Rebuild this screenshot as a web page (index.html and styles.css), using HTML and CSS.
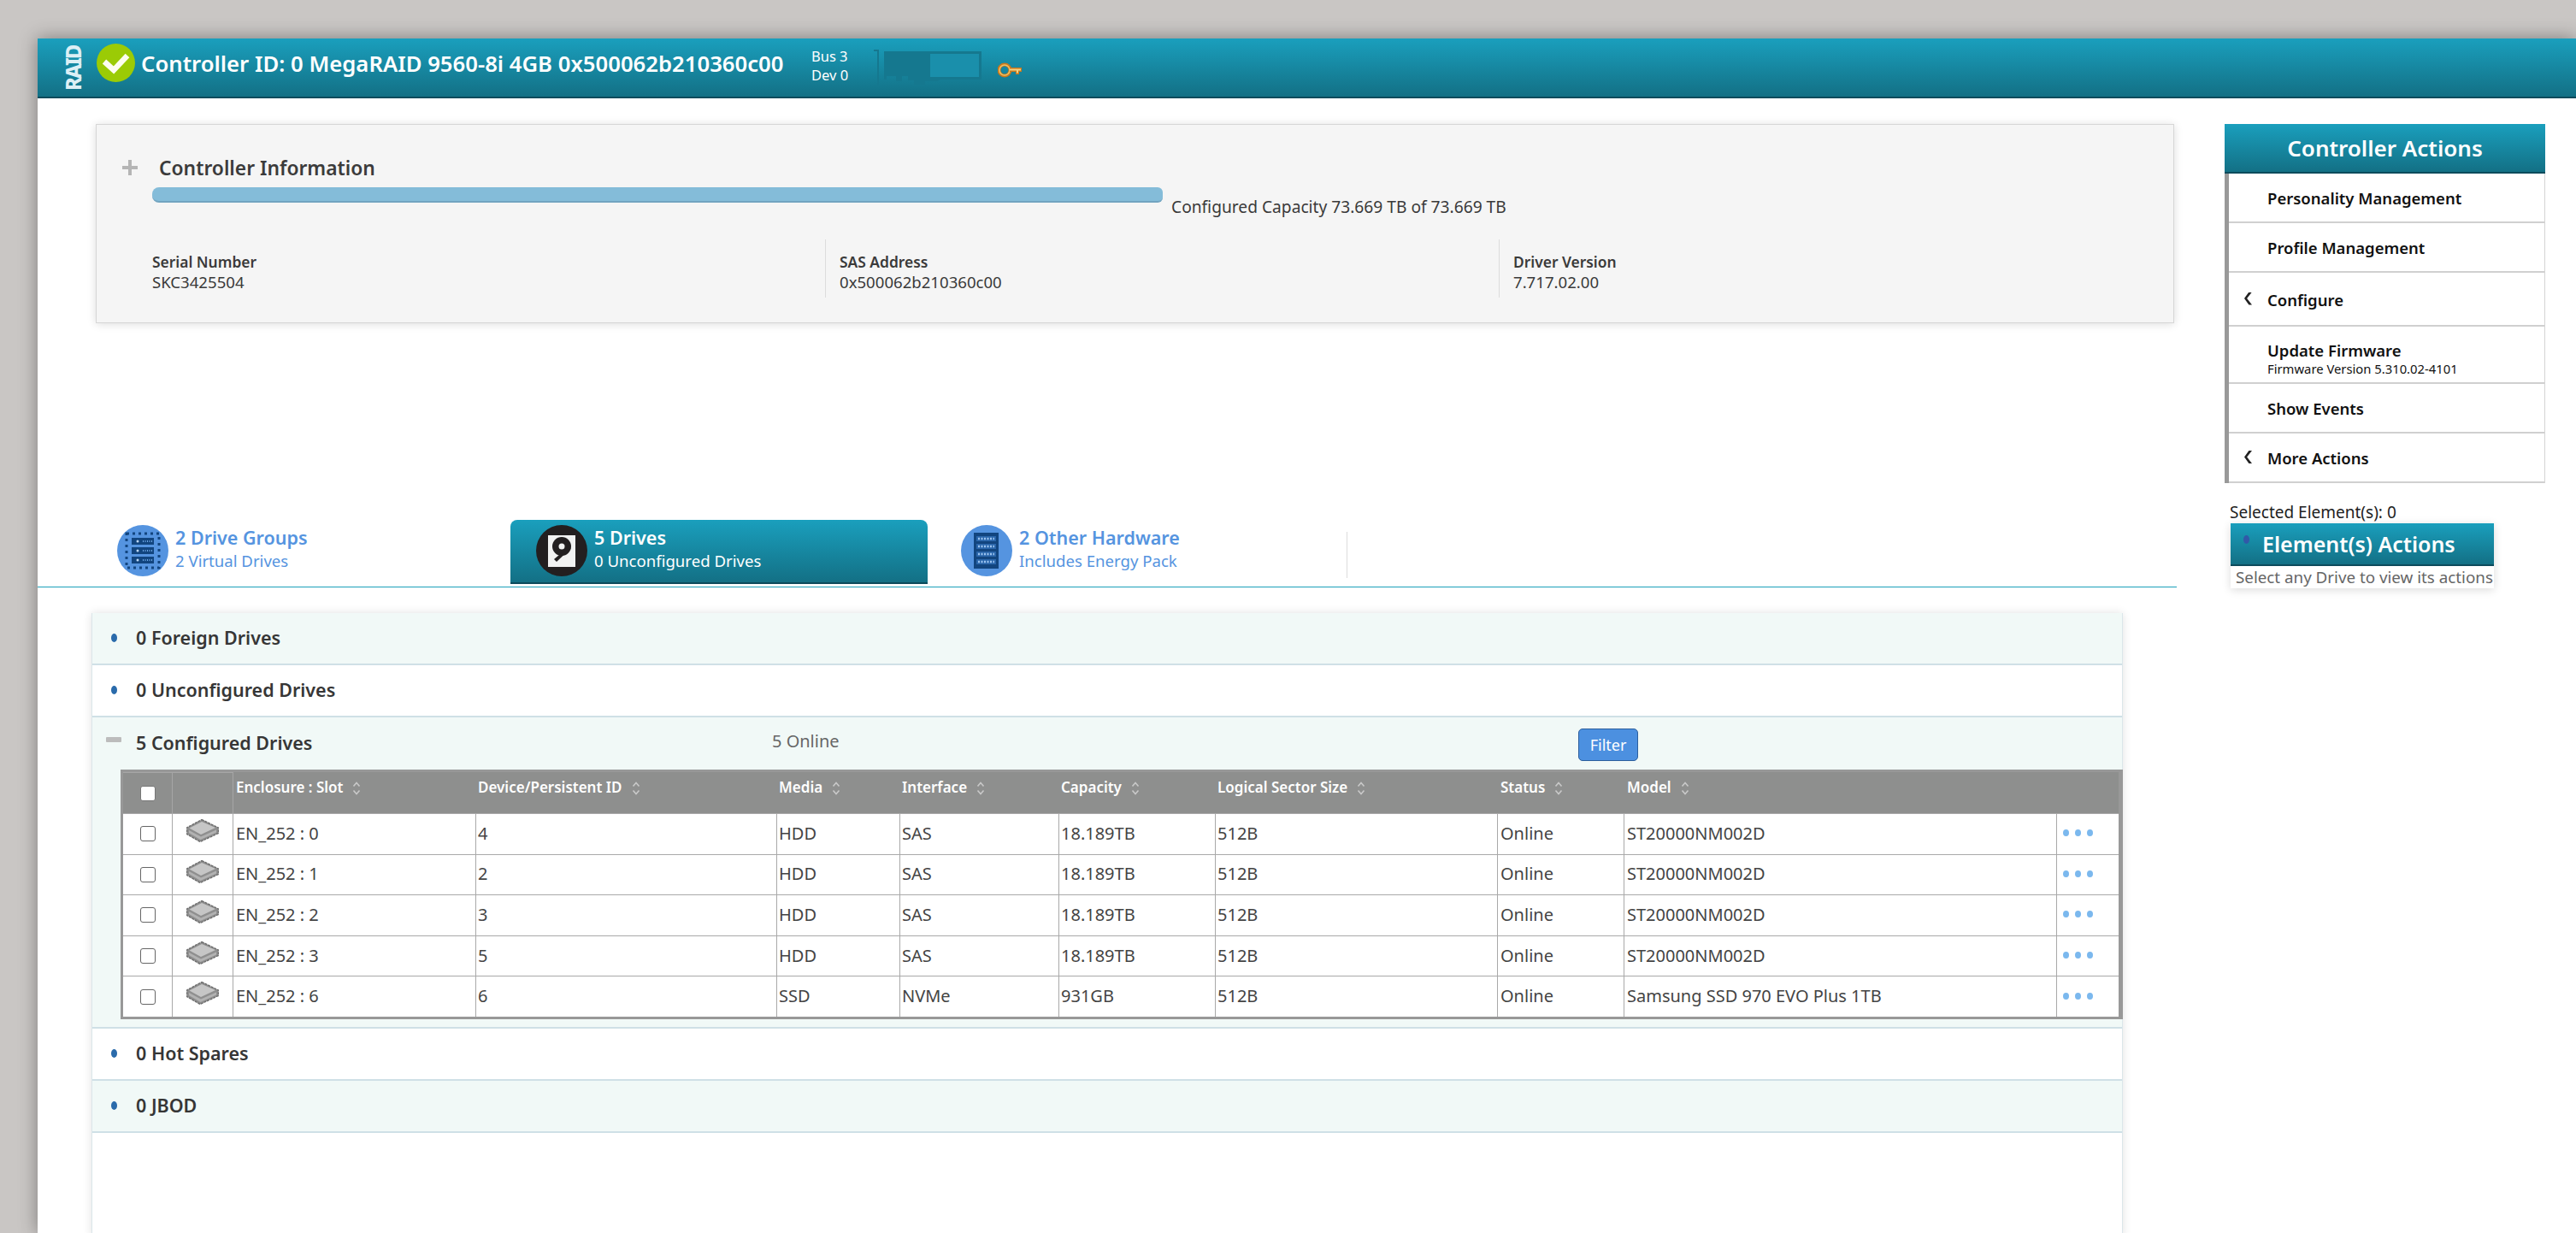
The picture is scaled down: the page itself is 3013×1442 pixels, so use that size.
FILE: index.html
```html
<!DOCTYPE html>
<html lang="en">
<head>
<meta charset="utf-8">
<title>Controller ID: 0 MegaRAID 9560-8i 4GB</title>
<link rel="stylesheet" href="styles.css">
</head>
<body>
<svg class="defs" width="0" height="0" aria-hidden="true">
  <symbol id="sort" viewBox="0 0 10 18">
    <path d="M1.500 6.500 5 2.500 8.500 6.500M1.500 11.500 5 15.500 8.500 11.500" fill="none" stroke="#c9c9c9" stroke-width="1.600"/>
  </symbol>
  <symbol id="hdd" viewBox="0 0 38 27">
    <path d="M18 .5 37.500 10V16.500L16 26.500 .5 17.500V10Z" fill="#8f8f8f"/>
    <path d="M18 3 34 10 17 18 3.500 10.500Z" fill="#c6c6c6"/>
    <path d="M3 13 17 20.500 35 12.500V15.500L16.500 24 3 16Z" fill="#b2b2b2"/>
    <path d="M18 .5 37.500 10V16.500L16 26.500 .5 17.500V10Z" fill="none" stroke="#6f6f6f" stroke-width="1.400" stroke-dasharray="3 1"/>
  </symbol>
</svg>
<div class="page">
  <header class="topbar">
    <span class="raid">RAID</span>
    <svg class="status" viewBox="0 0 45 45">
      <circle cx="22.500" cy="22.500" r="22.500" fill="#9bcb05"/>
      <path d="M9 21 20 31 36 14" fill="none" stroke="#fdfdf0" stroke-width="6.500"/>
    </svg>
    <h1 class="ctrl-title">Controller ID: 0 MegaRAID 9560-8i 4GB 0x500062b210360c00</h1>
    <div class="busdev"><span>Bus 3</span><span>Dev 0</span></div>
    <svg class="cardimg" viewBox="0 0 126 46">
      <path d="M0 1H6V45H4V3H0Z" fill="#15788f"/>
      <path d="M12 3H126V36H78L74 38H60V42H47V37H40V32H33V38H26V32H15V36H12Z" fill="#15788f"/>
      <rect x="66" y="6" width="57" height="27" fill="#1a8fab"/>
    </svg>
    <svg class="key" viewBox="0 0 28 20">
      <circle cx="8" cy="10" r="6.500" fill="none" stroke="#c9781c" stroke-width="4"/>
      <circle cx="8" cy="10" r="6" fill="none" stroke="#efc063" stroke-width="1.600"/>
      <path d="M14 7H28V12H25V15H21V12H14Z" fill="#c9781c"/>
      <path d="M14 8.500H27V10.500H24V13.500H22V10.500H14Z" fill="#f3d283"/>
    </svg>
  </header>

  <div class="content">
    <main class="main">
      <section class="info-card">
        <div class="info-title">
          <svg class="plus" viewBox="0 0 18 18"><path d="M7 0h4v7h7v4h-7v7H7v-7H0V7h7z" fill="#b5b5b5"/></svg>
          <h2>Controller Information</h2>
        </div>
        <div class="capacity">
          <div class="bar"></div>
          <span class="bar-label">Configured Capacity 73.669 TB of 73.669 TB</span>
        </div>
        <dl class="fields">
          <div class="field"><dt>Serial Number</dt><dd>SKC3425504</dd></div>
          <div class="field"><dt>SAS Address</dt><dd>0x500062b210360c00</dd></div>
          <div class="field"><dt>Driver Version</dt><dd>7.717.02.00</dd></div>
        </dl>
      </section>

      <nav class="tabs">
        <a class="tab tab-groups">
          <svg class="tab-icon" viewBox="0 0 60 60">
            <circle cx="30" cy="30" r="30" fill="#5594e0"/>
            <rect x="11" y="10" width="38" height="40" fill="none" stroke="#12457f" stroke-width="3" stroke-dasharray="3 4"/>
            <rect x="17" y="15" width="26" height="8" fill="#12457f"/>
            <rect x="17" y="26" width="26" height="8" fill="#12457f"/>
            <rect x="17" y="37" width="26" height="8" fill="#12457f"/>
            <circle cx="24" cy="19" r="1.500" fill="#bcd7f5"/><circle cx="24" cy="30" r="1.500" fill="#bcd7f5"/><circle cx="24" cy="41" r="1.500" fill="#bcd7f5"/>
            <path d="M30 19H41M30 30H41M30 41H41" stroke="#6ea8e6" stroke-width="2" stroke-dasharray="1 1.500"/>
          </svg>
          <span class="tab-text"><b>2 Drive Groups</b><small>2 Virtual Drives</small></span>
        </a>
        <a class="tab tab-active">
          <svg class="tab-icon" viewBox="0 0 60 60">
            <circle cx="30" cy="30" r="30" fill="#231f20"/>
            <rect x="14" y="12" width="32" height="37" fill="#f2f2f2"/>
            <circle cx="30" cy="25" r="11" fill="#231f20"/>
            <circle cx="30" cy="25" r="3.500" fill="#f2f2f2"/>
            <path d="M41 27 24 43 21 40 33 30Z" fill="#231f20"/>
          </svg>
          <span class="tab-text"><b>5 Drives</b><small>0 Unconfigured Drives</small></span>
        </a>
        <a class="tab tab-hardware">
          <svg class="tab-icon" viewBox="0 0 60 60">
            <circle cx="30" cy="30" r="30" fill="#5594e0"/>
            <rect x="15" y="9" width="29" height="42" fill="#12457f"/>
            <rect x="18" y="13" width="23" height="6" fill="#2a66ab"/>
            <rect x="18" y="22" width="23" height="6" fill="#2a66ab"/>
            <rect x="18" y="31" width="23" height="6" fill="#2a66ab"/>
            <rect x="18" y="40" width="23" height="6" fill="#2a66ab"/>
            <path d="M20 16H39M20 25H39M20 34H39M20 43H39" stroke="#9cc4f0" stroke-width="2.500" stroke-dasharray="2 1.500"/>
          </svg>
          <span class="tab-text"><b>2 Other Hardware</b><small>Includes Energy Pack</small></span>
        </a>
      </nav>

      <section class="panel">
        <div class="acc acc-tint">
          <span class="marker"><i class="dot"></i></span><h3>0 Foreign Drives</h3>
        </div>
        <div class="acc">
          <span class="marker"><i class="dot"></i></span><h3>0 Unconfigured Drives</h3>
        </div>
        <div class="acc-open">
          <div class="acc-head">
            <span class="marker"><i class="minus"></i></span><h3>5 Configured Drives</h3>
            <span class="online">5 Online</span>
            <button class="filter" type="button">Filter</button>
          </div>
          <table class="drives">
            <colgroup>
              <col class="c-check"><col class="c-icon"><col class="c-slot"><col class="c-dev"><col class="c-media"><col class="c-if"><col class="c-cap"><col class="c-lss"><col class="c-status"><col class="c-model"><col class="c-more">
            </colgroup>
            <thead>
              <tr>
                <th class="lined"><input type="checkbox" class="chk head-chk" aria-label="Select all"></th>
                <th class="lined"></th>
                <th>Enclosure : Slot<svg class="sort"><use href="#sort"/></svg></th>
                <th>Device/Persistent ID<svg class="sort"><use href="#sort"/></svg></th>
                <th>Media<svg class="sort"><use href="#sort"/></svg></th>
                <th>Interface<svg class="sort"><use href="#sort"/></svg></th>
                <th>Capacity<svg class="sort"><use href="#sort"/></svg></th>
                <th>Logical Sector Size<svg class="sort"><use href="#sort"/></svg></th>
                <th>Status<svg class="sort"><use href="#sort"/></svg></th>
                <th>Model<svg class="sort"><use href="#sort"/></svg></th>
                <th></th>
              </tr>
            </thead>
            <tbody>
              <tr>
                <td class="ctr"><input type="checkbox" class="chk" aria-label="Select"></td><td class="ctr top"><svg class="hdd"><use href="#hdd"/></svg></td>
                <td>EN_252 : 0</td><td>4</td><td>HDD</td><td>SAS</td><td>18.189TB</td><td>512B</td><td>Online</td><td>ST20000NM002D</td>
                <td class="more"><i></i><i></i><i></i></td>
              </tr>
              <tr>
                <td class="ctr"><input type="checkbox" class="chk" aria-label="Select"></td><td class="ctr top"><svg class="hdd"><use href="#hdd"/></svg></td>
                <td>EN_252 : 1</td><td>2</td><td>HDD</td><td>SAS</td><td>18.189TB</td><td>512B</td><td>Online</td><td>ST20000NM002D</td>
                <td class="more"><i></i><i></i><i></i></td>
              </tr>
              <tr>
                <td class="ctr"><input type="checkbox" class="chk" aria-label="Select"></td><td class="ctr top"><svg class="hdd"><use href="#hdd"/></svg></td>
                <td>EN_252 : 2</td><td>3</td><td>HDD</td><td>SAS</td><td>18.189TB</td><td>512B</td><td>Online</td><td>ST20000NM002D</td>
                <td class="more"><i></i><i></i><i></i></td>
              </tr>
              <tr>
                <td class="ctr"><input type="checkbox" class="chk" aria-label="Select"></td><td class="ctr top"><svg class="hdd"><use href="#hdd"/></svg></td>
                <td>EN_252 : 3</td><td>5</td><td>HDD</td><td>SAS</td><td>18.189TB</td><td>512B</td><td>Online</td><td>ST20000NM002D</td>
                <td class="more"><i></i><i></i><i></i></td>
              </tr>
              <tr>
                <td class="ctr"><input type="checkbox" class="chk" aria-label="Select"></td><td class="ctr top"><svg class="hdd"><use href="#hdd"/></svg></td>
                <td>EN_252 : 6</td><td>6</td><td>SSD</td><td>NVMe</td><td>931GB</td><td>512B</td><td>Online</td><td>Samsung SSD 970 EVO Plus 1TB</td>
                <td class="more"><i></i><i></i><i></i></td>
              </tr>
            </tbody>
          </table>
        </div>
        <div class="acc">
          <span class="marker"><i class="dot"></i></span><h3>0 Hot Spares</h3>
        </div>
        <div class="acc acc-tint">
          <span class="marker"><i class="dot"></i></span><h3>0 JBOD</h3>
        </div>
      </section>
    </main>

    <aside class="side">
      <div class="actions">
        <h2 class="teal side-head">Controller Actions</h2>
        <ul class="action-list">
          <li class="a-58"><span>Personality Management</span></li>
          <li class="a-58"><span>Profile Management</span></li>
          <li class="a-63 has-sub"><span>Configure</span></li>
          <li class="a-67 two"><span>Update Firmware</span><small>Firmware Version 5.310.02-4101</small></li>
          <li class="a-58"><span>Show Events</span></li>
          <li class="a-58 has-sub"><span>More Actions</span></li>
        </ul>
      </div>
      <p class="selected">Selected Element(s): 0</p>
      <div class="elements">
        <h2 class="teal el-head"><i class="el-dot"></i>Element(s) Actions</h2>
        <p class="el-hint">Select any Drive to view its actions</p>
      </div>
    </aside>
  </div>
</div>
</body>
</html>
```
FILE: styles.css
```css
* { box-sizing: border-box; }
html, body { margin: 0; height: 100%; }
body {
  background: #c9c6c4;
  padding: 45px 0 0 44px;
  overflow: hidden;
  font-family: "Noto Sans", "Open Sans", sans-serif;
  color: #3a3a3a;
}
.defs { position: absolute; }
h1, h2, h3, p, dl, dd, ul { margin: 0; padding: 0; }
.page {
  background: #fff;
  height: 1397px;
  box-shadow: 0 0 20px rgba(0, 0, 0, .38);
}

/* top bar */
.topbar, .teal, .tab-active {
  background: linear-gradient(#1a9fbd, #137085);
}
.topbar {
  height: 70px;
  display: flex;
  align-items: flex-start;
  border-bottom: 2px solid #0c4b5c;
  color: #fff;
}
.raid {
  writing-mode: vertical-rl;
  transform: rotate(180deg);
  font-size: 24px;
  font-weight: 800;
  letter-spacing: -2px;
  line-height: 18px;
  width: 18px;
  height: 52px;
  margin: 9px 0 0 33px;
  color: #dceff5;
  text-align: center;
  white-space: nowrap;
}
.status {
  width: 45px;
  height: 45px;
  margin: 6px 0 0 18px;
  flex: none;
}
.ctrl-title {
  font-size: 25.700px;
  font-weight: 600;
  line-height: 34px;
  margin: 13px 0 0 7px;
  white-space: nowrap;
  width: 784px;
}
.busdev {
  display: flex;
  flex-direction: column;
  font-size: 16.500px;
  line-height: 22px;
  margin-top: 10px;
  width: 73px;
}
.cardimg { width: 126px; height: 46px; margin-top: 12px; }
.key { width: 28px; height: 20px; margin: 27px 0 0 19px; }

/* layout */
.content {
  display: grid;
  grid-template-columns: 2502px 375px;
  column-gap: 56px;
  align-items: start;
}

/* info card */
.info-card {
  margin: 30px 3px 0 68px;
  height: 233px;
  padding-top: 30px;
  background: #f5f5f5;
  border: 1px solid #d6d6d6;
  box-shadow: 0 1px 10px rgba(0, 0, 0, .14);
}
.info-title {
  display: flex;
  align-items: center;
  height: 40px;
  padding-left: 30px;
}
.plus { width: 18px; height: 18px; }
.info-title h2 {
  font-size: 22.800px;
  font-weight: 600;
  margin-left: 25px;
  color: #3b3b3b;
}
.capacity {
  display: flex;
  align-items: flex-start;
  margin: 3px 0 0 65px;
}
.bar {
  width: 1182px;
  height: 18px;
  background: #84bcd9;
  border-bottom: 2px solid #72a4c0;
  border-radius: 8px 6px 6px 8px;
}
.bar-label {
  font-size: 19.200px;
  line-height: 26px;
  margin: 10px 0 0 10px;
  white-space: nowrap;
}
.fields {
  display: grid;
  grid-template-columns: 787px 788px 1fr;
  margin: 25px 0 0 65px;
  height: 68px;
}
.field {
  padding-top: 15px;
  font-size: 18.600px;
  line-height: 23px;
}
.field + .field { border-left: 1px solid #dcdcdc; padding-left: 16px; }
.field dt { font-weight: 600; font-size: 17.400px; }

/* tabs */
.tabs {
  display: flex;
  margin-top: 230px;
  height: 79px;
  padding-bottom: 3px;
  border-bottom: 1px solid #1ba0bb;
}
.tab {
  display: flex;
  height: 75px;
  padding-top: 6px;
  color: #5594e0;
  align-items: flex-start;
}
.tab-groups { width: 553px; padding-left: 93px; }
.tab-active {
  width: 488px;
  padding-left: 30px;
  color: #fff;
  border-radius: 8px 8px 0 0;
  border-bottom: 2px solid #0c4b5c;
}
.tab-hardware {
  width: 491px;
  padding-left: 39px;
  border-right: 1px solid #dcdcdc;
  margin-top: 14px;
  height: 54px;
  padding-top: 0;
}
.tab-hardware .tab-icon { margin-top: -8px; }
.tab-hardware .tab-text { margin-top: -8px; }
.tab-icon { width: 60px; height: 60px; flex: none; }
.tab-text {
  display: flex;
  flex-direction: column;
  margin-left: 8px;
  white-space: nowrap;
}
.tab-text b { font-size: 21.500px; font-weight: 600; line-height: 30px; }
.tab-text small { font-size: 18.600px; line-height: 24px; }

/* accordion */
.panel {
  margin: 30px 63px 0;
  height: 730px;
  background: #fff;
  border-left: 1px solid #dbe6ea;
  border-right: 1px solid #dbe6ea;
  box-shadow: 0 0 10px rgba(0, 0, 0, .12);
}
.acc, .acc-head {
  display: flex;
  align-items: center;
  height: 61px;
}
.acc { border-bottom: 2px solid #cfe0e6; }
.acc-tint, .acc-open { background: #f1f9f7; }
.acc-open {
  height: 364px;
  padding-left: 33px;
  border-bottom: 2px solid #cfe0e6;
}
.acc-head { margin-left: -33px; }
.marker { width: 51px; flex: none; display: block; height: 12px; }
.dot {
  display: block;
  width: 7px;
  height: 10px;
  margin: 0 0 0 22px;
  background: #2a6bab;
  border-radius: 50%;
}
.minus {
  display: block;
  width: 18px;
  height: 6px;
  margin: -2px 0 0 16px;
  background: #bcbcbc;
  border-radius: 1px;
}
h3 { font-size: 21.500px; font-weight: 600; color: #363636; white-space: nowrap; margin-top: -3px; }
.acc-head h3 { width: 744px; }
.online { width: 943px; font-size: 20px; color: #666; margin-top: -6px; }
.filter {
  width: 70px;
  height: 38px;
  padding: 0;
  margin-top: 2px;
  font: inherit;
  font-size: 18px;
  color: #fff;
  background: #4c90e0;
  border: 1px solid #2d5f9c;
  border-radius: 5px;
}

/* table */
.drives {
  width: 2342px;
  table-layout: fixed;
  border-collapse: separate;
  border-spacing: 0;
  border: solid #989898;
  border-width: 3px 5px 3px 3px;
  background: #fff;
  font-size: 20px;
  color: #444;
}
.c-check { width: 58px; }
.c-icon { width: 71px; }
.c-slot { width: 284px; }
.c-dev { width: 352px; }
.c-media { width: 144px; }
.c-if { width: 186px; }
.c-cap { width: 183px; }
.c-lss { width: 330px; }
.c-status { width: 148px; }
.c-model { width: 506px; }
.c-more { width: 72px; }
.drives th {
  height: 48px;
  padding: 3px 0 0 2px;
  background: #8e8f8e;
  color: #fff;
  font-size: 17px;
  font-weight: 600;
  text-align: left;
  vertical-align: top;
  white-space: nowrap;
  line-height: 30px;
}
.drives th.lined { border: 1px solid #a6a6a6; border-left: 0; border-bottom: 0; padding: 0; }
.drives th:first-child { text-align: center; vertical-align: middle; }
.sort { width: 10px; height: 18px; margin-left: 11px; vertical-align: -4px; }
.drives td {
  height: 47.600px;
  padding: 0 0 2px 2px;
  border-top: 1px solid #a9a9a9;
  border-right: 1px solid #a9a9a9;
  white-space: nowrap;
}
.drives td:nth-child(3), .drives th:nth-child(3),
.drives td:nth-child(n+9), .drives th:nth-child(n+9) { padding-left: 3px; }
.drives td:last-child { border-right: 0; }
.drives td.ctr { padding: 0; text-align: center; }
.drives td.top { vertical-align: top; padding-top: 6px; }
.chk {
  appearance: none;
  display: block;
  margin: 0 auto;
  width: 18px;
  height: 18px;
  background: #fff;
  border: 1px solid #666;
  border-radius: 3px;
}
.head-chk { border-color: #777; }
.hdd { display: block; width: 38px; height: 27px; margin: 0 auto; }
.drives td.more { padding: 0 0 9px 7px; }
.more i {
  display: inline-block;
  width: 7px;
  height: 8px;
  margin-right: 7px;
  background: #7bb8ee;
  border-radius: 50%;
}

/* side */
.side { padding-top: 30px; }
.side-head, .el-head {
  color: #fff;
  font-size: 25px;
  font-weight: 600;
}
.side-head {
  height: 58px;
  line-height: 56px;
  text-align: center;
  font-size: 26px;
  border-bottom: 2px solid #0c4b5c;
}
.action-list {
  list-style: none;
  border-left: 5px solid #999;
  border-right: 1px solid #d4d4d4;
  color: #111;
}
.action-list li {
  position: relative;
  display: flex;
  flex-direction: column;
  justify-content: center;
  padding: 2px 0 0 45px;
  border-bottom: 2px solid #d0d0d0;
  font-size: 18.500px;
  font-weight: 600;
  line-height: 24px;
}
.action-list small { font-size: 14.800px; font-weight: 400; line-height: 18px; }
.a-58 { height: 58px; }
.a-63 { height: 63px; }
.action-list .a-67 { height: 67px; padding-top: 8px; }
.has-sub::before {
  content: "";
  position: absolute;
  left: 18px;
  top: 50%;
  width: 9px;
  height: 15px;
  margin-top: -8px;
  background: #222;
  clip-path: polygon(100% 0, 35% 50%, 100% 100%, 60% 100%, 0 50%, 60% 0);
}
.selected {
  margin: 21px 0 0 6px;
  font-size: 19px;
  line-height: 26px;
  color: #222;
}
.elements {
  width: 308px;
  margin-left: 7px;
  box-shadow: 0 2px 10px rgba(0, 0, 0, .14);
}
.el-head {
  position: relative;
  height: 50px;
  line-height: 49px;
  padding-left: 37px;
  border-bottom: 2px solid #0c4b5c;
}
.el-dot {
  position: absolute;
  left: 15px;
  top: 14px;
  width: 7px;
  height: 10px;
  background: #3159a8;
  border-radius: 50%;
}
.el-hint {
  height: 26px;
  padding-left: 6px;
  font-size: 18.800px;
  line-height: 26px;
  color: #666;
  white-space: nowrap;
}
```
